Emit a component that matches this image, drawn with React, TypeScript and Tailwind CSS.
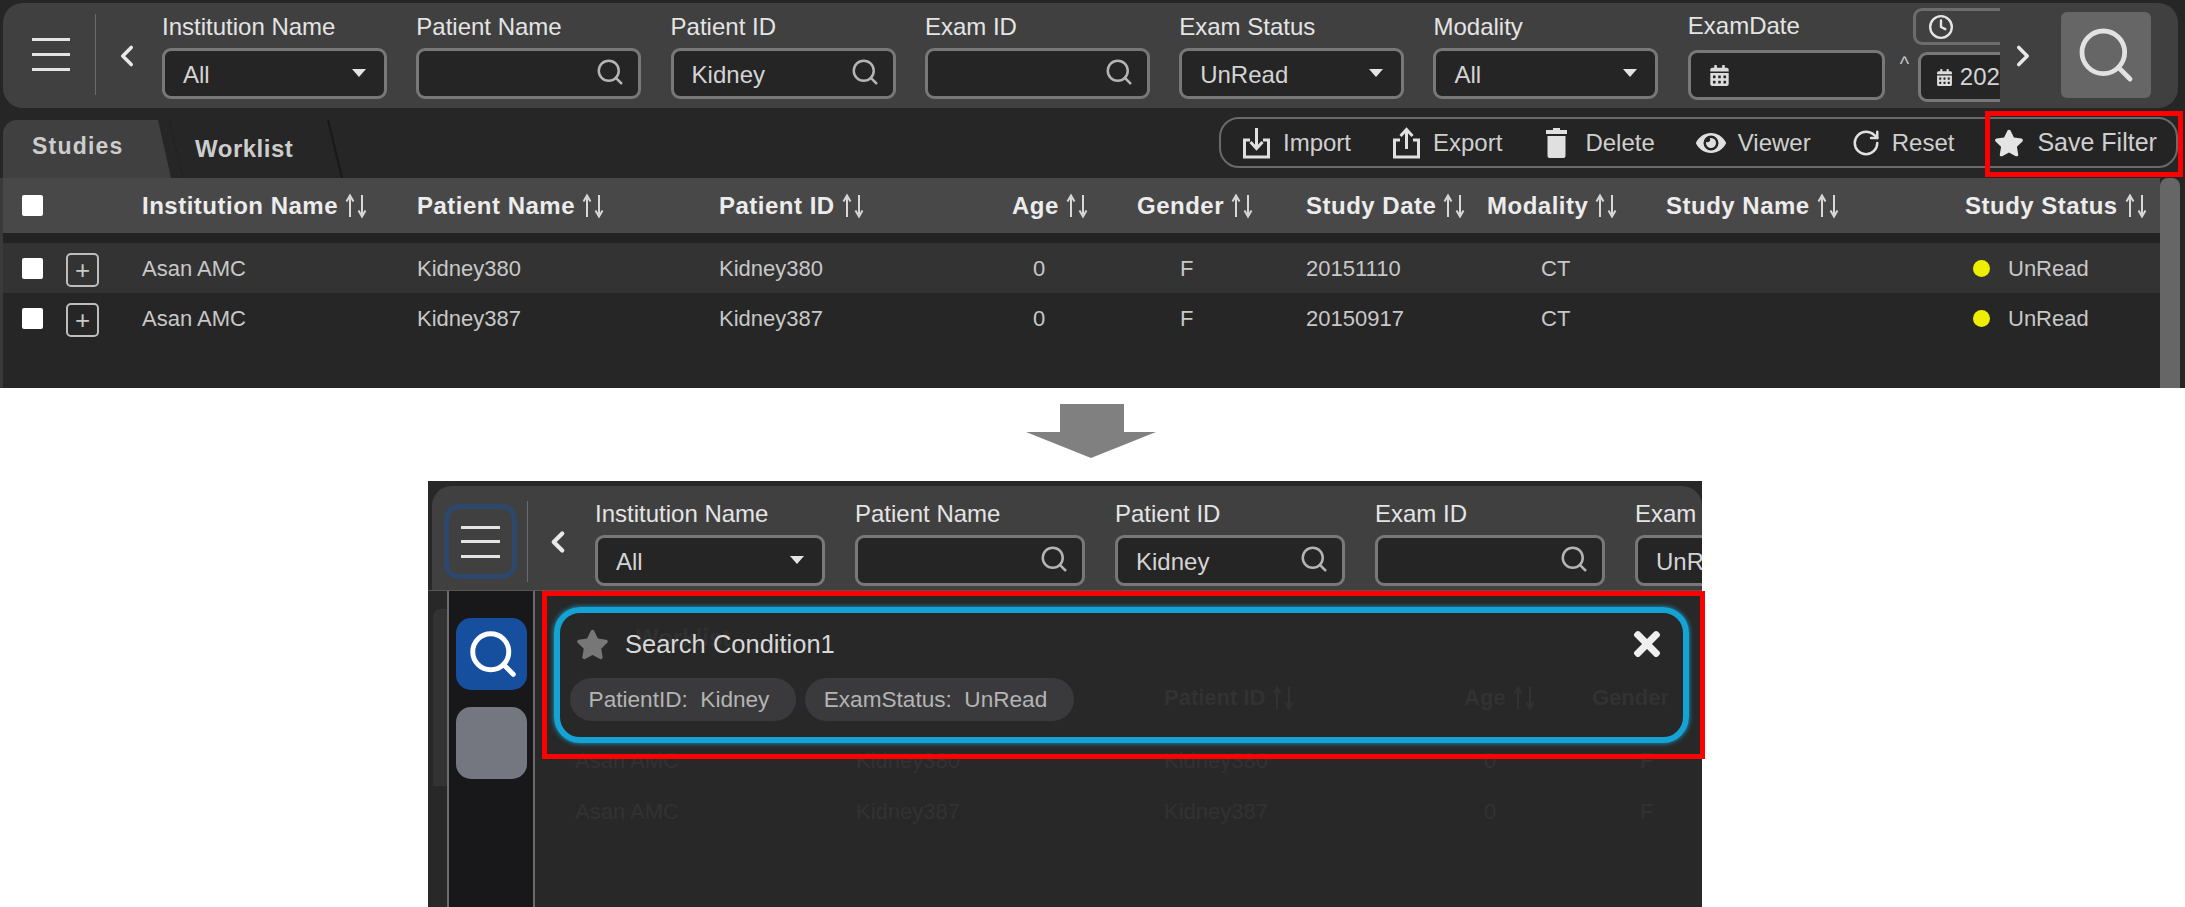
import { ChevronLeft, ChevronRight, Clock, RotateCw, Search } from "lucide-react";
import { FaCalendarAlt, FaEye, FaStar, FaTimes } from "react-icons/fa";

function Hamburger() {
  return (
    <div className="flex h-[33px] w-[38px] shrink-0 flex-col justify-between">
      <div className="h-[3px] bg-[#e4e4e4]" />
      <div className="h-[3px] bg-[#e4e4e4]" />
      <div className="h-[3px] bg-[#e4e4e4]" />
    </div>
  );
}

function SortArrows({ muted }: { muted?: boolean }) {
  return (
    <svg width="24" height="26" viewBox="0 0 24 26" className={muted ? "ml-[6px] text-[#323232]" : "ml-[6px] text-[#d8d8d8]"}>
      <path d="M6 24V5M2.5 8.5 6 2.5l3.5 6" fill="none" stroke="currentColor" strokeWidth="2" />
      <path d="M18 2v19M14.5 17.5l3.5 6 3.5-6" fill="none" stroke="currentColor" strokeWidth="2" />
    </svg>
  );
}

function Field({ label, value, kind, wide }: { label: string; value?: string; kind: "select" | "search"; wide?: boolean }) {
  return (
    <div className={wide ? "flex w-[230px] shrink-0 flex-col" : "flex w-[225px] shrink-0 flex-col"}>
      <div className="h-[30px] whitespace-nowrap text-[24px] leading-[30px] text-[#e4e4e4]">{label}</div>
      <div className="mt-[6px] flex h-[51px] items-center justify-between rounded-[9px] border-[3px] border-[#787878] bg-[#252525] pl-[18px] pr-[13px] text-[24px] text-[#d4d4d4]">
        <span className="pt-[3px]">{value}</span>
        {kind === "search" ? (
          <Search size={30} strokeWidth={2} className="mb-[3px] text-[#b4b4b4]" />
        ) : (
          <div className="mb-[1px] mr-[5px] h-0 w-0 border-x-[7px] border-t-[8px] border-x-transparent border-t-[#e4e4e4]" />
        )}
      </div>
    </div>
  );
}

function ImportIcon({ up }: { up?: boolean }) {
  return (
    <svg width="29" height="32" viewBox="0 0 29 32" fill="none" stroke="#e0e0e0" strokeWidth="3">
      <path d="M8 13H2.5v17h24V13H21" />
      {up ? <path d="M14.5 22V3M8.5 9l6-6.5 6 6.5" /> : <path d="M14.5 1v20M8.5 15l6 6.5 6-6.5" />}
    </svg>
  );
}

function TrashIcon() {
  return (
    <svg width="23" height="30" viewBox="0 0 23 30" fill="#e0e0e0">
      <path d="M8 0h7v2h7v4H1V2h7zM2.5 8h18v20a2 2 0 0 1-2 2h-14a2 2 0 0 1-2-2z" />
    </svg>
  );
}

function ToolItem({ icon, label, className }: { icon: React.ReactNode; label: string; className: string }) {
  return (
    <div className={`flex items-center text-[24px] text-[#cfcfcf] ${className}`}>
      {icon}
      <span className="whitespace-nowrap">{label}</span>
    </div>
  );
}

function Checkbox() {
  return <div className="h-[21px] w-[21px] rounded-[2px] bg-white" />;
}

function HeaderCell({ label }: { label: string }) {
  return (
    <div className="flex items-center whitespace-nowrap text-[24px] font-bold tracking-[0.5px] text-[#ececec]">
      {label}
      <SortArrows />
    </div>
  );
}

const rows = [
  { name: "Kidney380", date: "20151110", bg: "bg-[#333333]" },
  { name: "Kidney387", date: "20150917", bg: "" },
];

function TopPanel() {
  return (
    <div className="flex h-[388px] flex-col overflow-hidden bg-[#262626] pt-[3px]">
      {/* filter bar */}
      <div className="ml-[3px] mr-[7px] flex h-[105px] shrink-0 items-start rounded-[20px] bg-[#404040]">
        <div className="ml-[29px] mt-[35px]">
          <Hamburger />
        </div>
        <div className="ml-[25px] mt-[11px] h-[81px] w-[1px] shrink-0 bg-[#6a6a6a]" />
        <ChevronLeft size={34} strokeWidth={2.5} className="ml-[14px] mt-[36px] shrink-0 text-[#e8e8e8]" />
        <div className="ml-[18px] flex w-[1838px] shrink-0 gap-[29.3px] overflow-hidden pt-[9px]">
          <Field label="Institution Name" value="All" kind="select" />
          <Field label="Patient Name" kind="search" />
          <Field label="Patient ID" value="Kidney" kind="search" />
          <Field label="Exam ID" kind="search" />
          <Field label="Exam Status" value="UnRead" kind="select" />
          <Field label="Modality" value="All" kind="select" />
          <div className="flex shrink-0 items-start">
            <div className="flex w-[197px] flex-col">
              <div className="h-[30px] text-[24px] leading-[28px] text-[#e4e4e4]">ExamDate</div>
              <div className="mt-[8px] flex h-[50px] items-center rounded-[9px] border-[3px] border-[#787878] bg-[#252525] pl-[18px]">
                <FaCalendarAlt size={21} className="text-[#dcdcdc]" />
              </div>
            </div>
            <div className="ml-[15px] mt-[37px] w-[18px] text-[20px] text-[#c8c8c8]">^</div>
            <div className="-mt-[4px] flex flex-col">
              <div className="-ml-[5px] flex h-[37px] w-[125px] items-center rounded-[9px] border-[3px] border-[#6c6c6c] pl-[12px]">
                <Clock size={26} strokeWidth={2.2} className="text-[#e4e4e4]" />
              </div>
              <div className="mt-[7px] flex h-[50px] w-[120px] items-center rounded-[9px] border-[3px] border-[#787878] bg-[#252525] pl-[15px] text-[24px] text-[#d4d4d4]">
                <FaCalendarAlt size={17} className="mr-[7px] text-[#dcdcdc]" />
                2021
              </div>
            </div>
          </div>
        </div>
        <ChevronRight size={34} strokeWidth={2.5} className="ml-[6px] mt-[36px] shrink-0 text-[#e8e8e8]" />
        <div className="ml-[21px] mt-[9px] flex h-[86px] w-[90px] shrink-0 items-center justify-center rounded-[6px] bg-[#666666]">
          <Search size={64} strokeWidth={1.8} className="text-[#e2e2e2]" />
        </div>
      </div>

      {/* tabs and toolbar */}
      <div className="relative flex h-[70px] shrink-0 items-end">
        <div className="ml-[3px] flex h-[58px] w-[168px] items-center rounded-t-[14px] bg-[#404040] pb-[5px] pl-[29px] text-[23px] font-bold tracking-[1.2px] text-[#cdcdcd] [clip-path:polygon(0_0,155px_0,168px_100%,0_100%)]">
          Studies
        </div>
        <div className="-ml-[2px] h-[58px] w-[174px] bg-[#191919] [clip-path:polygon(0_0,160px_0,174px_100%,14px_100%)]">
          <div className="flex h-[58px] w-[172px] items-center bg-[#262626] pl-[26px] text-[24px] font-bold tracking-[0.5px] text-[#cdcdcd] [clip-path:polygon(0_0,158px_0,172px_100%,14px_100%)]">
            Worklist
          </div>
        </div>
        <div className="absolute left-[1219px] top-[9px] flex h-[51px] w-[959px] items-center rounded-[20px] border-[2px] border-[#6a6a6a] bg-[#242424]">
          <ToolItem className="ml-[21px] gap-[12px]" icon={<ImportIcon />} label="Import" />
          <ToolItem className="ml-[41px] gap-[12px]" icon={<ImportIcon up />} label="Export" />
          <ToolItem className="ml-[43px] gap-[17px]" icon={<TrashIcon />} label="Delete" />
          <ToolItem className="ml-[41px] gap-[12px]" icon={<FaEye size={30} className="text-[#e0e0e0]" />} label="Viewer" />
          <ToolItem className="ml-[40px] gap-[11px]" icon={<RotateCw size={30} strokeWidth={2} className="text-[#e0e0e0]" />} label="Reset" />
          <ToolItem className="ml-[40px] gap-[13px] text-[25px]" icon={<FaStar size={30} className="text-[#e4e4e4]" />} label="Save Filter" />
        </div>
        {/* highlight round Save Filter */}
        <div className="absolute left-[1985px] top-[3px] h-[66px] w-[198px] border-[5px] border-[#ff0000]" />
      </div>

      {/* studies table */}
      <div className="flex min-h-0 flex-1">
        <div className="w-[3px] bg-[#3a3a3a]" />
        <div className="min-w-0 flex-1">
          <div className="grid h-[55px] grid-cols-[19px_45px_75px_275px_302px_293px_125px_169px_181px_179px_299px_1fr] items-center bg-[#484848]">
            <div />
            <Checkbox />
            <div />
            <HeaderCell label="Institution Name" />
            <HeaderCell label="Patient Name" />
            <HeaderCell label="Patient ID" />
            <HeaderCell label="Age" />
            <HeaderCell label="Gender" />
            <HeaderCell label="Study Date" />
            <HeaderCell label="Modality" />
            <HeaderCell label="Study Name" />
            <HeaderCell label="Study Status" />
          </div>
          <div className="h-[10px] bg-[#232323]" />
          {rows.map((r) => (
            <div
              key={r.name}
              className={`grid h-[50px] grid-cols-[19px_45px_75px_275px_302px_293px_125px_169px_181px_179px_299px_1fr] items-center text-[22px] text-[#c8c8c8] ${r.bg}`}
            >
              <div />
              <Checkbox />
              <div className="flex h-[34px] w-[33px] translate-y-[2px] -translate-x-[1px] items-center justify-center rounded-[5px] border-[2px] border-[#bdbdbd] text-[26px] leading-none text-[#c8c8c8]">
                +
              </div>
              <div>Asan AMC</div>
              <div>{r.name}</div>
              <div>{r.name}</div>
              <div className="pl-[21px]">0</div>
              <div className="pl-[43px]">F</div>
              <div>{r.date}</div>
              <div className="pl-[54px]">CT</div>
              <div />
              <div className="flex items-center pl-[8px]">
                <div className="h-[17px] w-[17px] rounded-full bg-[#eeee00]" />
                <span className="ml-[18px]">UnRead</span>
              </div>
            </div>
          ))}
        </div>
        <div className="w-[20px] rounded-t-[8px] bg-[#666666]" />
        <div className="w-[5px]" />
      </div>
    </div>
  );
}

function DownArrow() {
  return (
    <div className="flex h-[93px] items-start justify-center pt-[16px]">
      <svg width="130" height="55" viewBox="0 0 130 55" className="-translate-x-[2px]">
        <path d="M34 0h64v28h32L65 54 0 28h34z" fill="#808080" />
      </svg>
    </div>
  );
}

const ghostCols = "grid grid-cols-[281px_308px_300px_128px_1fr] text-[22px] text-[#323232]";

function SavedFilterPanel() {
  return (
    <div className="relative ml-[428px] h-[426px] w-[1274px]">
      <div className="flex h-full flex-col overflow-hidden bg-[#282828] pt-[5px]">
        <div className="ml-[4px] flex h-[104px] shrink-0 items-start rounded-t-[20px] bg-[#404040]">
          <div className="ml-[12px] mt-[18px] flex h-[75px] w-[73px] shrink-0 items-center justify-center rounded-[15px] border-[5px] border-[#2d486c]">
            <div className="flex h-[32px] w-[39px] flex-col justify-between">
              <div className="h-[3px] bg-[#e4e4e4]" />
              <div className="h-[3px] bg-[#e4e4e4]" />
              <div className="h-[3px] bg-[#e4e4e4]" />
            </div>
          </div>
          <div className="ml-[10px] mt-[15px] h-[81px] w-[1px] shrink-0 bg-[#6a6a6a]" />
          <ChevronLeft size={34} strokeWidth={3} className="ml-[13px] mt-[39px] shrink-0 text-[#e8e8e8]" />
          <div className="ml-[20px] flex gap-[30px] pt-[13px]">
            <Field wide label="Institution Name" value="All" kind="select" />
            <Field wide label="Patient Name" kind="search" />
            <Field wide label="Patient ID" value="Kidney" kind="search" />
            <Field wide label="Exam ID" kind="search" />
            <Field wide label="Exam Status" value="UnRead" kind="select" />
          </div>
        </div>
        <div className="flex min-h-0 flex-1 border-t border-[#555555]">
          <div className="flex w-[19px] shrink-0">
            <div className="ml-[5px] mt-[18px] h-[177px] w-[14px] rounded-tl-[8px] bg-[#333333]" />
          </div>
          {/* quick filter rail */}
          <div className="flex w-[88px] shrink-0 flex-col items-center gap-[17px] border-x-[2px] border-x-[#6c6c6c] bg-[#18181a] pt-[27px]">
            <div className="flex h-[72px] w-[71px] items-center justify-center rounded-[15px] bg-[#174f9f] pl-[3px]">
              <Search size={54} strokeWidth={2.2} className="text-white" />
            </div>
            <div className="h-[72px] w-[71px] rounded-[15px] bg-[#747780]" />
          </div>
          {/* dimmed table behind the popup */}
          <div className="min-w-0 flex-1 overflow-hidden pl-[40px]">
            <div className="mt-[29px] pl-[61px] text-[24px] font-bold text-[#303030]">Worklist</div>
            <div className={`${ghostCols} mt-[25px] font-bold`}>
              <div />
              <div />
              <div className="flex items-center">Patient ID<SortArrows muted /></div>
              <div className="flex items-center">Age<SortArrows muted /></div>
              <div>Gender</div>
            </div>
            <div className={`${ghostCols} mt-[30px]`}>
              <div>Asan AMC</div>
              <div>Kidney380</div>
              <div>Kidney380</div>
              <div className="pl-[20px]">0</div>
              <div className="pl-[48px]">F</div>
            </div>
            <div className={`${ghostCols} mt-[18px]`}>
              <div>Asan AMC</div>
              <div>Kidney387</div>
              <div>Kidney387</div>
              <div className="pl-[20px]">0</div>
              <div className="pl-[48px]">F</div>
            </div>
          </div>
        </div>
      </div>

      {/* saved filter popup */}
      <div className="absolute left-[114px] top-[110px] h-[168px] w-[1163px] border-[5px] border-[#ff0000]">
        <div className="ml-[7px] mt-[11px] h-[136px] w-[1135px] rounded-[26px] border-[6px] border-[#14a3d4] px-[13px] pt-[15px] shadow-[0_0_5px_#14a3d4]">
          <div className="flex h-[32px] items-center">
            <FaStar size={33} className="ml-[3px] text-[#777777]" />
            <span className="ml-[16px] text-[25.5px] text-[#d8d8d8]">Search Condition1</span>
            <FaTimes size={38} className="ml-auto mr-[4px] text-[#efefef]" />
          </div>
          <div className="-ml-[3px] mt-[18px] flex gap-[9px]">
            <div className="flex h-[43px] w-[226px] items-center justify-center rounded-full bg-[#3a3a3c] pr-[8px] text-[22.6px] text-[#b4b4b4]">PatientID:&nbsp; Kidney</div>
            <div className="flex h-[43px] w-[269px] items-center justify-center rounded-full bg-[#3a3a3c] pr-[8px] text-[22.6px] text-[#b4b4b4]">ExamStatus:&nbsp; UnRead</div>
          </div>
        </div>
      </div>
    </div>
  );
}

export default function App() {
  return (
    <div className="h-[907px] w-[2185px] overflow-hidden bg-white font-['Liberation_Sans',Arial,sans-serif]">
      <TopPanel />
      <DownArrow />
      <SavedFilterPanel />
    </div>
  );
}
